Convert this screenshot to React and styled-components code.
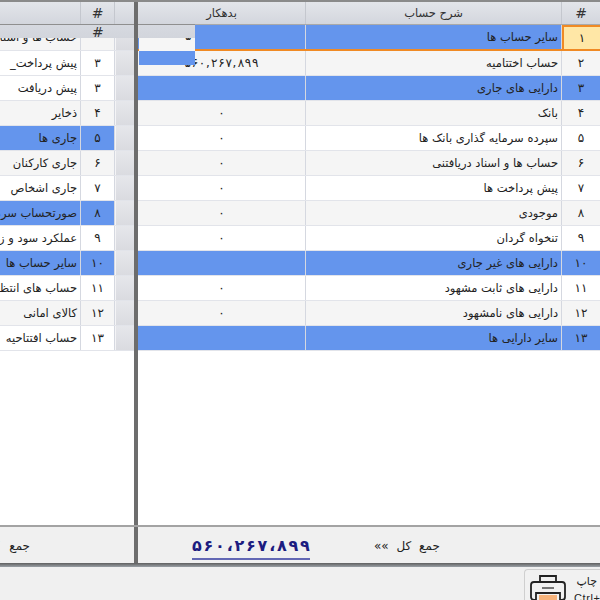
import React from "react";
import styled, { createGlobalStyle, css } from "styled-components";

const Global = createGlobalStyle`
  html, body { margin: 0; padding: 0; background: #f0f0f0; }
  body { font-family: "DejaVu Sans", "Noto Sans", sans-serif; }
  #root { width: 600px; height: 600px; overflow: hidden; }
`;

const BLUE = "#6495ed";
const HEAD = "linear-gradient(#e3e5ea, #d3d6dd)";

const Page = styled.div`
  position: relative;
  width: 600px;
  height: 600px;
  overflow: hidden;
  display: flex;
  flex-direction: column;
  background: #f0f0f0;
  color: #222;
`;
const TopLine = styled.div`
  height: 2px;
  flex: none;
  background: #8a8a8a;
`;
const Main = styled.div`
  flex: none;
  height: 523px;
  display: flex;
  background: #fff;
`;
const Splitter = styled.div`
  flex: none;
  width: 4px;
  background: #6d6d6d;
  position: relative;
  z-index: 3;
`;
const LeftPane = styled.div`
  flex: none;
  width: 134px;
  overflow: hidden;
  display: flex;
  justify-content: flex-end;
`;
const RightPane = styled.div`
  flex: none;
  width: 462px;
  overflow: hidden;
`;
const Table = styled.div`
  flex: none;
  width: ${(p) => p.$width}px;
  display: flex;
  flex-direction: column;
`;
const HeadRow = styled.div`
  display: grid;
  grid-template-columns: ${(p) => p.$cols};
  height: 22px;
  border-bottom: 1px solid #a9a9a9;
  background: ${HEAD};
`;
const HeadCell = styled.div`
  border-right: 1px solid #c4c7ce;
  display: flex;
  align-items: center;
  justify-content: center;
  font-size: 11.5px;
  padding-bottom: 1px;
  color: #333;
  direction: rtl;
  &:last-child { border-right: 0; }
`;
const Hash = styled(HeadCell)`
  font-size: 14px;
  font-weight: 400;
`;
const Row = styled.div`
  display: grid;
  grid-template-columns: ${(p) => p.$cols};
  height: ${(p) => (p.$first ? 25 : 24)}px;
  border-bottom: 1px solid #e2e4ea;
  background: ${(p) => (p.$blue ? BLUE : p.$alt ? "#f5f5f5" : "#fff")};
  ${(p) => p.$selected && css`border-bottom: 2px solid #f08a24; height: 24px;`}
`;
const Cell = styled.div`
  border-right: 1px solid #d5d8e0;
  display: flex;
  align-items: center;
  overflow: visible;
  white-space: nowrap;
  font-size: 11.5px;
  letter-spacing: 0.5px;
  padding-bottom: 1px;
  direction: rtl;
  &:last-child { border-right: 0; }
`;
const NameCell = styled(Cell)`
  justify-content: flex-start;
  padding-right: 3px;
`;
const NumCell = styled(Cell)`
  justify-content: center;
  letter-spacing: 1.5px;
  font-size: 12px;
  ${(p) => p.$selected && css`
    background: #ffe7a6;
    border: 2px solid #f08a24;
    margin-bottom: -2px;
    padding-bottom: 0;
  `}
  ${(p) => p.$blue && !p.$selected && css`background: ${BLUE};`}
`;
const AmountCell = styled(Cell)`
  justify-content: center;
  font-size: 12px;
`;
const SpreadDigits = styled.span`
  display: inline-flex;
  direction: ltr;
  justify-content: space-between;
  width: ${(p) => p.$width}px;
`;
const HeaderGhost = styled.div`
  position: absolute;
  left: 0;
  top: 24px;
  width: 195px;
  height: 14px;
  background: linear-gradient(#d6d9e0, #d2d5dc);
  border-top: 1px solid #8f8f8f;
  box-sizing: border-box;
  z-index: 2;
`;
const GhostHash = styled.span`
  position: absolute;
  left: 92px;
  top: -1px;
  font-size: 14px;
  color: #333;
`;
const WhiteGhost = styled.div`
  position: absolute;
  left: 139px;
  top: 38px;
  width: 56px;
  height: 13px;
  background: #f6f6f6;
  overflow: hidden;
  z-index: 2;
`;
const GhostDigit = styled.span`
  position: absolute;
  left: 46px;
  top: -9px;
  font-size: 12px;
`;
const BlueGhost = styled.div`
  position: absolute;
  left: 139px;
  top: 51px;
  width: 56px;
  height: 14px;
  background: ${BLUE};
  z-index: 2;
`;
const GripCell = styled(Cell)`
  background: linear-gradient(#e6e7eb, #dadbe0);
  border-left: 1px solid #f4f4f6;
`;
const Footer = styled.div`
  flex: none;
  height: 38px;
  display: flex;
  border-top: 2px solid #a3a3a3;
  box-sizing: border-box;
  background: #f0f0f0;
`;
const FooterLeft = styled.div`
  flex: none;
  width: 134px;
  display: flex;
  align-items: center;
  padding-right: 104px;
  padding-top: 1px;
  box-sizing: border-box;
  font-size: 12px;
  word-spacing: 6px;
  white-space: nowrap;
  direction: rtl;
  justify-content: flex-start;
`;
const FooterRight = styled.div`
  flex: none;
  width: 462px;
  position: relative;
  display: flex;
  align-items: center;
  padding-left: 54px;
  gap: 64px;
  box-sizing: border-box;
`;
const Total = styled.div`
  align-self: flex-end;
  margin-bottom: 3px;
  font-size: 16px;
  line-height: 18px;
  font-weight: 700;
  color: #1c1c80;
  border-bottom: 2px solid #6267b4;
  padding-bottom: 3px;
  width: 118px;
  white-space: nowrap;
  direction: ltr;
`;
const TotalLabel = styled.div`
  font-size: 12px;
  word-spacing: 4px;
  padding-top: 2px;
  direction: rtl;
  white-space: nowrap;
  color: #222;
`;
const BottomRule = styled.div`
  flex: none;
  height: 4px;
  background: linear-gradient(#5f5f5f, #9aa0a6);
`;
const Toolbar = styled.div`
  flex: 1;
  display: flex;
  justify-content: flex-end;
  align-items: flex-start;
  padding-top: 2px;
`;
const PrintButton = styled.div`
  width: 76px;
  height: 44px;
  flex: none;
  display: flex;
  gap: 8px;
  padding: 4px 0 0 5px;
  box-sizing: border-box;
  border: 1px solid #cfcfcf;
  border-right: 0;
  border-radius: 4px 0 0 0;
  background: #f1f1f1;
`;
const ButtonLabels = styled.div`
  display: flex;
  flex-direction: column;
  align-items: flex-end;
  flex: 1;
  min-width: 0;
  font-size: 11px;
  white-space: nowrap;
  overflow: hidden;
  gap: 4px;
  padding: 1px 3px 0 0;
`;
const ShortCut = styled.span`
  align-self: flex-start;
  letter-spacing: 0.6px;
  font-family: "Liberation Sans", sans-serif;
  font-size: 11px;
`;

const PrinterIcon = () => (
  <svg width="36" height="36" viewBox="0 0 36 36" fill="none" stroke="#222" strokeWidth="1.8" style={{ flex: "none" }}>
    <path d="M10 8V2h16v6" />
    <path d="M6 26H4a3 3 0 0 1-3-3V11a3 3 0 0 1 3-3h28a3 3 0 0 1 3 3v12a3 3 0 0 1-3 3h-2" />
    <path d="M12 14h12" strokeWidth="1.2" />
    <path d="M6 19h24v17H6z" />
    <rect x="9" y="21" width="18" height="14" fill="#f6b27a" stroke="none" />
  </svg>
);

const fa = (n) => String(n).replace(/\d/g, (d) => "۰۱۲۳۴۵۶۷۸۹"[d]);

const Spread = ({ text, width }) => (
  <SpreadDigits $width={width}>
    {[...text].map((c, i) => (
      <span key={i}>{c}</span>
    ))}
  </SpreadDigits>
);

const rightCols = "168px 256px 38px";
const leftCols = "215px 34px 19px";

const rightRows = [
  { n: "سایر حساب ها", blue: true, selected: true },
  { n: "حساب اختتامیه", alt: true, a: "۵۶۰,۲۶۷,۸۹۹", wide: true },
  { n: "دارایی های جاری", blue: true },
  { n: "بانک", alt: true, a: "۰" },
  { n: "سپرده سرمایه گذاری بانک ها", a: "۰" },
  { n: "حساب ها و  اسناد دریافتنی", alt: true, a: "۰" },
  { n: "پیش پرداخت ها", a: "۰" },
  { n: "موجودی", alt: true, a: "۰" },
  { n: "تنخواه گردان", a: "۰" },
  { n: "دارایی های غیر جاری", blue: true },
  { n: "دارایی های ثابت مشهود", a: "۰" },
  { n: "دارایی های نامشهود", alt: true, a: "۰" },
  { n: "سایر دارایی ها", blue: true },
];

const leftRows = [
  { n: "حساب ها و اسناد", alt: true },
  { i: 3, n: "پیش پرداخت_" },
  { i: 3, n: "پیش دریافت" },
  { i: 4, n: "ذخایر", alt: true },
  { i: 5, n: "جاری ها", blue: true },
  { i: 6, n: "جاری کارکنان", alt: true },
  { i: 7, n: "جاری اشخاص" },
  { i: 8, n: "صورتحساب سرمایه", blue: true },
  { i: 9, n: "عملکرد سود و زیان" },
  { i: 10, n: "سایر حساب ها", blue: true },
  { i: 11, n: "حساب های انتظامی" },
  { i: 12, n: "کالای امانی", alt: true },
  { i: 13, n: "حساب افتتاحیه" },
];

export default function App() {
  return (
    <Page>
      <Global />
      <TopLine />
      <Main>
        <LeftPane>
          <Table $width={268}>
            <HeadRow $cols={leftCols}>
              <HeadCell />
              <Hash>#</Hash>
              <HeadCell />
            </HeadRow>
            {leftRows.map((r, idx) => (
              <Row key={idx} $cols={leftCols} $blue={r.blue} $alt={r.alt} $first={idx === 0}>
                <NameCell>{r.n}</NameCell>
                <NumCell $blue={r.blue}>{r.i ? fa(r.i) : ""}</NumCell>
                <GripCell />
              </Row>
            ))}
          </Table>
        </LeftPane>
        <Splitter />
        <RightPane>
          <Table $width={462}>
            <HeadRow $cols={rightCols}>
              <HeadCell>بدهکار</HeadCell>
              <HeadCell>شرح حساب</HeadCell>
              <Hash>#</Hash>
            </HeadRow>
            {rightRows.map((r, idx) => (
              <Row key={idx} $cols={rightCols} $blue={r.blue} $alt={r.alt} $selected={r.selected} $first={idx === 0}>
                <AmountCell>{r.wide ? <Spread text={r.a} width={74} /> : r.a}</AmountCell>
                <NameCell>{r.n}</NameCell>
                <NumCell $selected={r.selected}>{fa(idx + 1)}</NumCell>
              </Row>
            ))}
          </Table>
        </RightPane>
      </Main>
      <Footer>
        <FooterLeft>جمع کل</FooterLeft>
        <Splitter />
        <FooterRight>
          <Total>
            <Spread text="۵۶۰،۲۶۷،۸۹۹" width={118} />
          </Total>
          <TotalLabel>جمع کل »»</TotalLabel>
        </FooterRight>
      </Footer>
      <BottomRule />
      <Toolbar>
        <PrintButton>
          <PrinterIcon />
          <ButtonLabels>
            <span>چاپ</span>
            <ShortCut>Ctrl+P</ShortCut>
          </ButtonLabels>
        </PrintButton>
      </Toolbar>
      <HeaderGhost>
        <GhostHash>#</GhostHash>
      </HeaderGhost>
      <WhiteGhost>
        <GhostDigit>۵</GhostDigit>
      </WhiteGhost>
      <BlueGhost />
    </Page>
  );
}
